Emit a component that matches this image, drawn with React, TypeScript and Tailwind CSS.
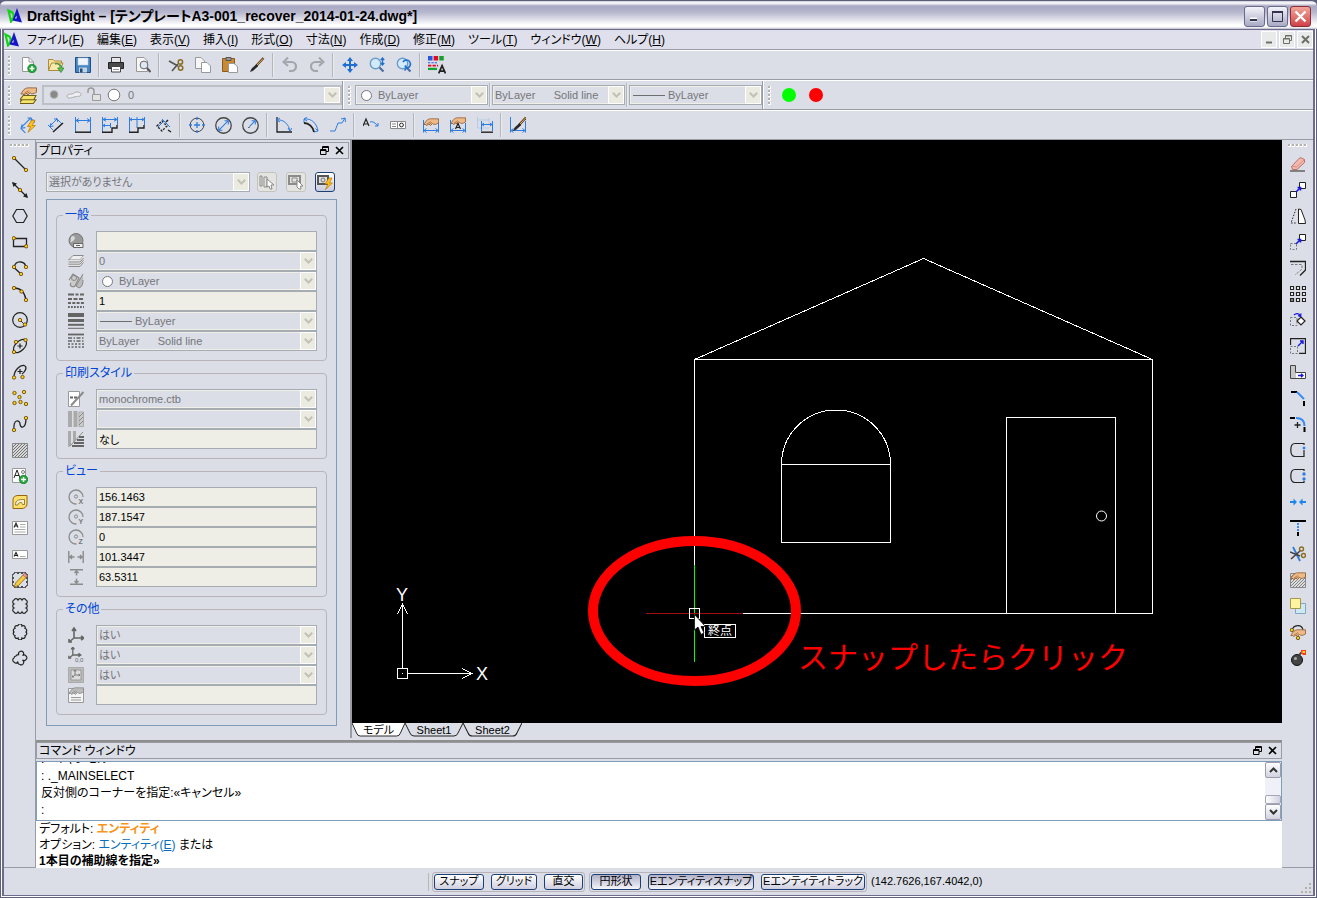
import type { ReactNode } from "react";

const K = "#222";
const B = "#2f7de0";
const G = "#8b8b8b";

type Pt = [number, number];

function Ico({ children, size = 16 }: { children: ReactNode; size?: number }) {
  return (
    <svg width={size} height={size} viewBox="0 0 16 16" fill="none" stroke={K} aria-hidden="true" className="shrink-0">
      {children}
    </svg>
  );
}

function Dots({ at }: { at: Pt[] }) {
  return (
    <>
      {at.map(([x, y]) => (
        <circle key={`${x}-${y}`} cx={x} cy={y} r={1.7} fill="#ffd21a" stroke="#5a3c00" strokeWidth={0.8} />
      ))}
    </>
  );
}

// scalloped outline through the given points
function cloud(pts: Pt[], r = 1.5) {
  return `M${pts[0].join(" ")}` + [...pts.slice(1), pts[0]].map((p) => `A${r} ${r} 0 0 1 ${p.join(" ")}`).join("");
}

const rectCloud: Pt[] = [[2, 2], [6, 2], [10, 2], [14, 2], [14, 6], [14, 10], [14, 14], [10, 14], [6, 14], [2, 14], [2, 10], [2, 6]];
const roundCloud: Pt[] = [[6, 2], [10, 2], [13, 4.5], [14, 8], [13, 11.5], [10, 14], [6, 14], [3, 11.5], [2, 8], [3, 4.5]];
const freeCloud: Pt[] = [[7, 5], [8, 1.5], [11, 2], [10.5, 5.5], [14, 6], [14, 9.5], [10.5, 10], [11.5, 13], [8, 14.5], [6, 11.5], [2, 12], [2, 8], [4, 6]];

const Hand = ({ y = 0, gray = false }: { y?: number; gray?: boolean }) => (
  <>
    <path
      d={`M.8 ${y + 6.5}C2 ${y + 5} 3 ${y + 2.5} 5 ${y + 1.5}C7 ${y + 0.3} 10 ${y + 1} 15.5 ${y + 0.8}V${y + 5}C13 ${y + 6.5} 11 ${y + 7} 9.500 ${y + 5.5}L7.500 ${y + 7.5}L6 ${y + 6}L3.500 ${y + 7.5}L3 ${y + 6.5}Z`}
      fill={gray ? "#bbb" : "#eebb88"}
      stroke={gray ? "#888" : "#8c5a32"}
      strokeWidth={0.8}
    />
    <path d={`M4 ${y + 6}L8 ${y + 3.5}M6 ${y + 6.5}L9 ${y + 4.5}`} stroke={gray ? "#888" : "#8c5a32"} strokeWidth={0.6} />
  </>
);

const Dim = () => <path d="M.5 3V15.500M15.500 6V15.500M1 13.500H15M3.500 11.500L1 13.500L3.500 15.500M12.500 11.500L15 13.500L12.500 15.500" stroke={B} />;
const Bolt = ({ x = 0, y = 0 }: { x?: number; y?: number }) => (
  <path d={`M${x + 11} ${y + 3}L${x + 7} ${y + 9}H${x + 10}L${x + 7.5} ${y + 14.5}L${x + 14.5} ${y + 8}H${x + 11.5}L${x + 14} ${y + 3}Z`} fill="#ffc21a" stroke="#b87500" strokeWidth={0.7} />
);
const Glass = () => (
  <>
    <path d="M10 10L14.5 14.5" stroke="#4d6ea0" strokeWidth={2.2} />
    <circle cx={6.5} cy={6.5} r={5.2} fill="#d3eafb" stroke="#6b9cc9" strokeWidth={1.4} />
  </>
);
const HatchLines = ({ c = "#666" }: { c?: string }) => (
  <path d="M1 5L4 2M1 8L7 2M1 11L10 2M1 14L13 2M3 15L15 3M6 15L15 6M9 15L15 9M12 15L15 12" stroke={c} strokeWidth={0.9} />
);
const MoveArrow = ({ c = "#1919e0" }: { c?: string }) => <path d="M6 10L10 6M7.5 5.5H10.5V8.5" stroke={c} strokeWidth={1.6} />;
const Brush = () => (
  <>
    <path d="M14.5 1L7 9" stroke="#5a3a1a" strokeWidth={2.4} />
    <path d="M14.2 1.4L8 8" stroke="#e0b060" strokeWidth={1} />
    <path d="M7.5 7.5L9 9L4 13.5L1.5 14.5L3 11.5Z" fill={K} strokeWidth={0.6} />
  </>
);
const Scissors = () => (
  <>
    <path d="M1 4L10 9M4 14L10 7" stroke="#555" strokeWidth={1.6} />
    <circle cx={12.4} cy={5} r={2.2} stroke="#8a6b24" strokeWidth={1.5} />
    <circle cx={12.6} cy={11} r={2.2} stroke="#8a6b24" strokeWidth={1.5} />
  </>
);

const fileIcons: ReactNode[][] = [
  [
    <Ico key="new"><path d="M1.5 .5H8L12.5 5V14.5H1.5Z" fill="#fff" stroke="#999" /><path d="M8 .5V5H12.5" stroke="#999" /><circle cx={11} cy={11.5} r={4.3} fill="#22a63c" stroke="#0e7524" strokeWidth={0.7} /><path d="M11 9V14M8.5 11.5H13.5" stroke="#fff" strokeWidth={1.5} /></Ico>,
    <Ico key="open"><path d="M.5 13.5V2.5H5L6.5 4H13.5V6" fill="#f7e3a0" stroke="#b08a3a" /><path d="M.5 13.5L3.5 6H15L12 13.5Z" fill="#fbe9ae" stroke="#b08a3a" /><path d="M7 7C10 6 12 8 12 11H9.5L13 15.5L16 11H14C14 8 11 6 7 7" fill="#5bb955" stroke="#2c8430" strokeWidth={0.7} /></Ico>,
    <Ico key="save"><path d="M.5 .5H15.5V15.5H.5Z" fill="#4486c4" stroke="#1d4f86" /><path d="M3 1H13V8H3Z" fill="#eef4fa" stroke="#bcd0e4" strokeWidth={0.6} /><path d="M4 10.5H12V15.5H4Z" fill="#c4d3e0" stroke="none" /><path d="M5 11.5H7.5V15.5H5Z" fill="#244b77" stroke="none" /></Ico>,
  ],
  [
    <Ico key="print"><path d="M3.5 .5H12.5V6H3.5Z" fill="#e6e6e6" stroke="#444" /><path d="M.5 5.5H15.5V11.5H.5Z" fill="#4a4a4a" /><path d="M3.5 9.5H12.5V15H3.5Z" fill="#fff" stroke="#444" /><path d="M5 12.5H11" stroke="#999" /></Ico>,
    <Ico key="preview"><path d="M1.5 .5H9L12.5 4V14.5H1.5Z" fill="#f6f6f6" stroke="#999" /><circle cx={9} cy={8} r={3.9} fill="#dfe8ee" stroke="#667" /><path d="M12 11L15.5 15" stroke="#555" strokeWidth={2} /></Ico>,
  ],
  [
    <Ico key="cut"><Scissors /></Ico>,
    <Ico key="copy"><path d="M.5 .5H6L9.5 4V11.5H.5Z" fill="#f6f6f6" stroke="#999" /><path d="M6.5 5.5H12L15.5 9V15.5H6.5Z" fill="#fff" stroke="#999" /></Ico>,
    <Ico key="paste"><path d="M.5 1.5H12.5V14.5H.5Z" fill="#c98a35" stroke="#8b5a1a" /><path d="M4 .5H9V3.5H4Z" fill="#999" stroke="#555" /><path d="M6.5 6.5H12L15.5 9.5V15.5H6.5Z" fill="#fff" stroke="#999" /></Ico>,
    <Ico key="brush"><Brush /></Ico>,
  ],
  [
    <Ico key="undo"><path d="M3.5 5H9.5A4.2 4.2 0 0 1 9.5 14H7" stroke="#a3a5aa" strokeWidth={2.2} /><path d="M6 .5L1.5 5L6 9" stroke="#a3a5aa" strokeWidth={2} /></Ico>,
    <Ico key="redo"><path d="M12.5 5H6.5A4.2 4.2 0 0 0 6.5 14H9" stroke="#a3a5aa" strokeWidth={2.2} /><path d="M10 .5L14.5 5L10 9" stroke="#a3a5aa" strokeWidth={2} /></Ico>,
  ],
  [
    <Ico key="pan"><path d="M8 0L11 4H9V7H12V5L16 8L12 11V9H9V12H11L8 16L5 12H7V9H4V11L0 8L4 5V7H7V4H5Z" fill="#1e6fd0" stroke="none" /></Ico>,
    <Ico key="zoom"><Glass /><path d="M13.5 1V8M11.8 3L13.5 1L15.2 3M11.8 6L13.5 8L15.2 6" stroke="#1e6fd0" strokeWidth={1.3} /></Ico>,
    <Ico key="zoomback"><Glass /><path d="M7 5A4 4 0 1 1 11 11M9 8.500L10.500 11L8.500 13.500" stroke="#1e6fd0" strokeWidth={1.600} /></Ico>,
  ],
  [
    <Ico key="props" size={18}><path d="M0 0H4V4H0Z" fill="#2456e0" stroke="none" /><path d="M5 0H9V4H5Z" fill="#e00b2a" stroke="none" /><path d="M10 0H14V4H10Z" fill="#13a32c" stroke="none" /><path d="M0 6H9" stroke="#2456e0" strokeDasharray="2 1" /><path d="M0 8.500H9" stroke="#e00b2a" strokeWidth={1.600} strokeDasharray="3 1" /><path d="M0 11.500H8" stroke="#13a32c" strokeWidth={2} /><path d="M9.500 15.500L12.500 8.500L15.500 15.500M10.500 13.500H14.500" strokeWidth={1.500} /></Ico>,
  ],
];

const dimIcons: ReactNode[][] = [
  [
    <Ico key="smart" size={17}><path d="M1 10L10 1M2 7L1 10.5L5 10M7 1H10.5V4M1 11L5 15M10 1L14 5" stroke={B} /><Bolt /></Ico>,
    <Ico key="aligned"><path d="M2 9L9 2M3 6L2 9.500L5.500 9M6 2H9.500V5M0 8L5 13M8 1L14 7" stroke={B} /><path d="M5 15L15 6" strokeWidth={1.5} /></Ico>,
    <Ico key="linear"><path d="M.5 0V15M15.500 0V15M1 3.500H15M4 1.500L1 3.500L4 5.500M12 1.500L15 3.500L12 5.500" stroke={B} /><path d="M0 15.200H16" strokeWidth={1.5} /></Ico>,
    <Ico key="baseline"><path d="M.5 0V15M15.500 0V8M8.500 6V11M1 2.500H15M1 8.500H8M4 .8L1 2.500L4 4.200M12 .8L15 2.500L12 4.200M3 7L1 8.500L3 10" stroke={B} /><path d="M0 15.200H10V11H15V8" strokeWidth={1.4} /></Ico>,
    <Ico key="continue"><path d="M.5 0V15M8 0V11M15.500 0V8M1 2.500H15M3 1L1 2.500L3 4M13 1L15 2.500L13 4" stroke={B} /><path d="M0 15.200H9V11H15V8" strokeWidth={1.4} /></Ico>,
    <Ico key="ordinate"><path d="M1 9L6 4L11 9L6 14Z" strokeDasharray="2 1.5" strokeWidth={1.4} /><path d="M6 2L14 10M2 10L8 4" stroke={B} /><path d="M10 5L12 3M12 13L15 15" strokeWidth={1.5} /></Ico>,
  ],
  [
    <Ico key="center"><circle cx={8} cy={8} r={6.800} stroke="#444" /><path d="M8 0V3M8 13V16M0 8H3M13 8H16M8 5V11M5 8H11" stroke={B} strokeWidth={1.3} /></Ico>,
    <Ico key="diameter" size={17}><circle cx={8} cy={8} r={7.300} stroke="#444" strokeWidth={1.200} /><path d="M3.500 12.500L12.500 3.500M3.500 9V12.500H7M9 3.500H12.500V7" stroke={B} /></Ico>,
    <Ico key="radius" size={17}><circle cx={8} cy={8} r={7.300} stroke="#444" strokeWidth={1.200} /><path d="M7 9L12.500 3.500M9 3.500H12.500V7" stroke={B} /><path d="M6.500 10V9.500" strokeWidth={1.400} /></Ico>,
  ],
  [
    <Ico key="angular"><path d="M1 0V15H16" strokeWidth={1.3} /><path d="M1 3C8 2 13 8 14 14M4 1L1 3L4 5M12 11L14 14L16 11" stroke={B} /></Ico>,
    <Ico key="arclen"><path d="M1 2C9 1 14 7 15 14M4 0L1 2L4 4M12.500 11.500L15 14M1 2V6M11 15L15 14" stroke={B} /><path d="M1 6C6 6 10 10 11 15" strokeWidth={1.800} /></Ico>,
    <Ico key="jogged"><path d="M0 14H5L8 6H12L15 1M11 2L15 1L15.500 5" stroke={B} /></Ico>,
  ],
  [
    <Ico key="leader"><path d="M0 9L3 2L6 9M1 7H5" strokeWidth={1.2} /><path d="M7 5C10 4 12 6 15 9M12 9H15V6" stroke={B} /></Ico>,
    <Ico key="tolerance"><path d="M.5 4.500H15.500V11.500H.5ZM7.500 4.500V11.500" fill="#fff" stroke="#888" /><path d="M2 7H6M2 9.500H6" stroke="#888" /><circle cx={11.500} cy={8} r={1.900} /></Ico>,
  ],
  [
    <Ico key="edit"><Dim /><Hand y={1} /></Ico>,
    <Ico key="edittext"><Dim /><Hand y={0} /><path d="M5.500 12L8 6.500L10.500 12M6.500 10.500H9.500" strokeWidth={1.200} /></Ico>,
    <Ico key="update"><path d="M.5 0V11H12M12 1V8M1 3H12" stroke="#b7cbe8" /><path d="M4.500 4V14M15.500 4V14M5 7.500H15M7 6L5 7.500L7 9M13 6L15 7.500L13 9" stroke={B} /><path d="M4 15.200H16" strokeWidth={1.4} /></Ico>,
  ],
  [
    <Ico key="style"><Dim /><path d="M.5 0V8M15.500 4V8" stroke={B} /><g transform="translate(2 -1)"><Brush /></g></Ico>,
  ],
];

const drawIcons: ReactNode[] = [
  <><path d="M2 2L14 14" strokeWidth={1.3} /><Dots at={[[2, 2], [14, 14]]} /></>,
  <><path d="M1 1L15 15" strokeWidth={1.3} /><path d="M0 0L5 1.500L1.500 5ZM16 16L11 14.500L14.500 11Z" fill={K} stroke="none" /><Dots at={[[8, 8]]} /></>,
  <path d="M.8 8L4.500 1.500H11.500L15.200 8L11.500 14.500H4.500Z" strokeWidth={1.2} />,
  <><path d="M1.500 4.500H14.500V12.500H1.500Z" strokeWidth={1.300} /><Dots at={[[1.800, 4.200], [14.200, 12.300]]} /></>,
  <><path d="M9 14L2 7.500C3 3 6 1.500 9 2C12 2.500 13.500 4.500 13.500 6.500" strokeWidth={1.300} /><Dots at={[[2, 7], [14, 7], [9, 14]]} /></>,
  <><path d="M2 2Q12 2 14 14" strokeWidth={1.300} /><Dots at={[[2, 2], [9.500, 5.500], [14, 14]]} /></>,
  <><circle cx={8} cy={8} r={7.300} strokeWidth={1.200} /><path d="M8 8L13 13" /><Dots at={[[8, 8], [13, 12.500]]} /></>,
  <><ellipse cx={8} cy={8} rx={8} ry={4.600} transform="rotate(-45 8 8)" strokeWidth={1.200} /><path d="M8 5.500V10.500M5.500 8H10.500" strokeWidth={1.200} /><Dots at={[[13.500, 2], [2, 14], [4, 4]]} /></>,
  <><path d="M2 13C2 6 8 1 12 1.500C16 3 13 8 10 10" strokeWidth={1.300} /><path d="M8 5V10M5.500 7.500H10.500" strokeWidth={1.200} /><Dots at={[[2, 13.500], [10.500, 13]]} /></>,
  <Dots at={[[2.500, 3], [12, 2], [7.500, 7], [2.500, 13], [8.500, 12], [14, 14]]} />,
  <><path d="M2 14C1 2 8 4 8 8S14 14 14 2" strokeWidth={1.300} /><Dots at={[[2, 14], [14, 2]]} /></>,
  <><path d="M.5 1.500H15.500V15.500H.5Z" fill="#d8d8d8" stroke="#888" /><HatchLines /></>,
  <><path d="M.5 .5H13.500V14.500H.5Z" fill="#fff" stroke="#999" /><path d="M2 10L5 2L8 10M3 7.500H7" /><circle cx={11} cy={4} r={1.500} stroke="#777" /><circle cx={11.500} cy={11.500} r={4.200} fill="#22a63c" stroke="#0e7524" strokeWidth={0.700} /><path d="M11.500 9V14M9 11.500H14" stroke="#fff" strokeWidth={1.500} /></>,
  <><path d="M1 6C1 3 3 1.500 6 1.500H15V10C15 13 12 14.500 10 14.500H1Z" fill="#ffdf6b" stroke="#94680c" /><path d="M3.500 11C3.500 6 6 5.500 12.500 5.500V10.500H10.500L9.500 8.500C7 8.500 6 9 6 11Z" fill="#f6f0d0" stroke="#7d6a2a" strokeWidth={0.800} /></>,
  <><path d="M.5 1.500H15.500V14.500H.5Z" fill="#fff" stroke="#999" /><path d="M2 7.500L4 3L6 7.500M2.500 6H5.500" strokeWidth={1.100} /><path d="M8 4.500H13.500M8 7H13.500M2.500 9.500H13.500M2.500 12H13.500" stroke="#aaa" /></>,
  <><path d="M.5 4.500H15.500V12.500H.5Z" fill="#fff" stroke="#999" /><path d="M2 10.500L4 6.500L6 10.500M2.500 9.500H5.500" strokeWidth={1.100} /><path d="M8 10.500H13.500" stroke="#aaa" /></>,
  <><path d={cloud(rectCloud)} /><path d="M2 15L4 10.500L12 2L15 4.500L6.500 13.500Z" fill="#f6c945" stroke="#8a6410" strokeWidth={0.800} /><path d="M11 3L12.500 1.200L15.500 4L14 5.500Z" fill="#f29a9a" stroke="#a05050" strokeWidth={0.600} /></>,
  <path d={cloud(rectCloud, 2.200)} strokeWidth={1.200} />,
  <path d={cloud(roundCloud, 2)} strokeWidth={1.200} />,
  <path d={cloud(freeCloud, 2.200)} strokeWidth={1.200} />,
];

const modifyIcons: ReactNode[] = [
  <><path d="M0 15H15" stroke="#777" strokeWidth={1.800} /><path d="M1.500 10.500L9 2.500Q10 1.500 11.500 2L14.500 3.500V6.500L7 13.500H2.500Z" fill="#f4b8ae" stroke="#b0675c" strokeWidth={0.900} /><path d="M2 10L6.500 11L14 4" stroke="#d88f84" /></>,
  <><path d="M.5 9.500H6.500V15.500H.5ZM9.500 .5H15.500V6.500H9.500Z" fill="#fff" /><MoveArrow /></>,
  <><path d="M6 1L1 15H7" strokeDasharray="1.500 1.500" /><path d="M8.500 1L11 1.500L15 12L15.500 15.500H8.500Z" fill="#fff" /></>,
  <><path d="M.5 9.500H6.500V15.500H.5Z" strokeDasharray="2 1.500" stroke="#777" /><path d="M9.500 .5H15.500V6.500H9.500Z" fill="#fff" /><MoveArrow /></>,
  <><path d="M0 1.500H15.500V10L10 15.500" strokeWidth={1.300} /><path d="M1 4.500H12V9L5 15" strokeDasharray="2.500 1.500" stroke="#777" /></>,
  <>{[1, 7, 13].map((y) => [1, 7, 13].map((x) => <path key={`${x}${y}`} d={`M${x - 0.5} ${y - 0.5}h3v3h-3z`} fill={x === 1 && y === 13 ? "#888" : "#fff"} strokeWidth={1.200} />))}</>,
  <><path d="M.5 5.500H7V13.500H.5Z" strokeDasharray="2 1.500" stroke="#777" /><path d="M11 5L15 9L11 13L7 9Z" fill="#fff" strokeWidth={1.200} /><path d="M4 3C6 1 9 1 10.500 4M8 3.500L10.500 4.500L11 1.500" stroke="#1919e0" strokeWidth={1.300} /></>,
  <><path d="M.5 7V.5H15.500V15.500H9" strokeWidth={1.300} /><path d="M.5 8.500H7.500V15.500H.5Z" strokeDasharray="2 1.500" stroke="#777" /><path d="M8 8L13 3M10 3H13V6" stroke="#1919e0" strokeWidth={1.400} /></>,
  <><path d="M.5 1.500H5.500V8.500H15.500V14.500H.5Z" fill="#fff" stroke="#444" /><path d="M1 2H5V9H6V14H1Z" fill="#c8c8c8" stroke="none" /><path d="M8 11.500H12.500M11 9.800L13 11.500L11 13.200" stroke="#1919e0" strokeWidth={1.300} /></>,
  <><path d="M1 2H7M14 11V16" stroke="#000" strokeWidth={2} /><path d="M7 2L14 9" stroke="#3a8cf0" strokeWidth={2} /></>,
  <><path d="M0 2H5M14.500 11V16" stroke="#000" strokeWidth={2} /><path d="M6 2C12 2 14.500 5 14.500 10" stroke="#3a8cf0" strokeWidth={2} /><path d="M7.500 6V12M4.500 9H10.500" strokeWidth={1.300} /></>,
  <><path d="M14 3V1.500H5C2 1.500 .8 4 .8 8S2 14.500 5 14.500H14V8" strokeWidth={1.200} /><circle cx={14} cy={6} r={1.800} fill={B} stroke="#dbeafe" strokeWidth={0.600} /></>,
  <><path d="M14 3V1.500H5C2 1.500 .8 4 .8 8S2 14.500 5 14.500H14V13" strokeWidth={1.200} /><circle cx={14} cy={6} r={1.700} fill={B} stroke="none" /><circle cx={14} cy={11} r={1.700} fill={B} stroke="none" /></>,
  <><path d="M0 8H4M12 8H16" stroke="#1e86e8" strokeWidth={2} /><path d="M3.500 4.500L7 8L3.500 11.500ZM12.500 4.500L9 8L12.500 11.500Z" fill="#1e86e8" stroke="none" /></>,
  <><path d="M0 1H16M8 12V16" stroke="#000" strokeWidth={2} /><path d="M8 3V11" stroke="#3a8cf0" strokeWidth={2} strokeDasharray="2 1" /></>,
  <><path d="M3 1L10 15" stroke={B} strokeWidth={1.800} /><path d="M0 6L10 10M1 13L10 5" stroke="#444" strokeWidth={1.600} /><circle cx={11.500} cy={3} r={2} stroke="#8a6b24" strokeWidth={1.400} /><circle cx={13.500} cy={9.500} r={2} stroke="#8a6b24" strokeWidth={1.400} /></>,
  <><path d="M.5 1.500H15.500V15.500H.5Z" fill="#ddd" stroke="#888" /><HatchLines c="#777" /><Hand /></>,
  <><path d="M5.500 5.500H15.500V15.500H5.500Z" fill="#cfe8f6" stroke="#84a8bf" /><path d="M.5 .5H10.500V10.500H.5Z" fill="#fff3a0" stroke="#a59a4c" /></>,
  <><path d="M2 7C3 0 12 0 13 6" strokeWidth={1.200} /><Hand y={5} /><Dots at={[[1.800, 6], [8, 14]]} /></>,
  <><circle cx={7} cy={10} r={5.500} fill="#444" stroke="#111" /><circle cx={5.500} cy={8.500} r={1.500} fill="#aaa" stroke="none" /><path d="M9 5L12 2" stroke="#444" strokeWidth={1.800} /><path d="M11 0H16V5H13L11 3Z" fill="#ff3b18" stroke="none" /><path d="M12.500 1H15V3H12.500Z" fill="#ffe02a" stroke="none" /></>,
];

const Rot = ({ axis }: { axis: string }) => (
  <><path d="M15 8A7 7 0 1 0 8.500 15" stroke={G} strokeWidth={1.300} /><circle cx={8} cy={7.500} r={1.600} stroke={G} /><text x={10.500} y={15} fontSize={7} fontWeight={700} fill="#777" stroke="none" fontFamily="Liberation Sans, sans-serif">{axis}</text></>
);
const Axes = ({ y = 0 }: { y?: number }) => <path d={`M6 ${y + 1}V${y + 10}H15M6 ${y + 10}L1 ${y + 14}M4 ${y + 3}L6 ${y}L8 ${y + 3}M13 ${y + 8}L16 ${y + 10}L13 ${y + 12}M1 ${y + 11}V${y + 14}H4`} stroke="#666" strokeWidth={1.600} />;

type Field = { label: string; icon: ReactNode; value: string; kind: "input" | "select"; mark?: "circle" | "line" };

const groups: { title: string; fields: Field[] }[] = [
  {
    title: "一般",
    fields: [
      { label: "ハイパーリンク", kind: "input", value: "", icon: <><circle cx={8} cy={7.500} r={7} fill="#999" stroke="#777" /><path d="M3 4C6 1 9 5 5 8S3 8 3 4" fill="#d8d8d8" stroke="none" /><path d="M5.500 10.500H15V14.500H5.500Z" fill="#eee" stroke="#666" /><path d="M8 12.500H12" stroke="#666" /></> },
      { label: "画層", kind: "select", value: "0", icon: <><path d="M.5 7L5 2.500H15.500L12 7Z" fill="#eee" stroke={G} /><path d="M.5 7V13.500H12L15.500 9.500V2.500L12 7Z" fill="#e4e4e4" stroke="none" /><path d="M.5 9H12L15.500 5M.5 11.200H12L15.500 7.200M.5 13.500H12L15.500 9.500" stroke={G} /></> },
      { label: "線の色", kind: "select", value: "ByLayer", mark: "circle", icon: <><path d="M1 7L5 1L11 5L7 13C4 15 1 12 3 10" fill="#ccc" stroke={G} strokeWidth={1.200} /><circle cx={6} cy={5} r={2.500} stroke="#888" /><path d="M15 1L8 13L11 15C14 14 15 11 15 7" fill="#bbb" stroke="#888" /></> },
      { label: "線種尺度", kind: "input", value: "1", icon: <><path d="M0 1.500H16" stroke="#666" strokeWidth={2} strokeDasharray="6 1.500 3 1.500" /><path d="M0 6H16" stroke="#666" strokeWidth={2} strokeDasharray="4 1.500" /><path d="M0 10H16" stroke="#666" strokeWidth={1.800} strokeDasharray="3 1.300" /><path d="M0 14H16" stroke="#666" strokeWidth={1.800} strokeDasharray="1.800 1.200" /></> },
      { label: "線の太さ", kind: "select", value: "ByLayer", mark: "line", icon: <><path d="M0 2H16" stroke="#666" strokeWidth={4} /><path d="M0 7.500H16" stroke="#666" strokeWidth={3} /><path d="M0 11.800H16" stroke="#666" strokeWidth={2} /><path d="M0 15.300H16" stroke="#666" /></> },
      { label: "線種", kind: "select", value: "ByLayer\u00a0\u00a0\u00a0\u00a0\u00a0\u00a0Solid line", icon: <><path d="M0 1.500H16" stroke="#666" strokeWidth={1.800} /><path d="M0 5H16M0 8H16" stroke="#666" strokeWidth={1.500} strokeDasharray="4 1.500 1.500 1.500" /><path d="M0 11H16M0 14H16" stroke="#666" strokeWidth={1.500} strokeDasharray="2 1.500" /></> },
    ],
  },
  {
    title: "印刷スタイル",
    fields: [
      { label: "印刷スタイルテーブル", kind: "select", value: "monochrome.ctb", icon: <><path d="M.5 .5H11.500V15.500H.5Z" fill="#fff" stroke="#999" /><path d="M2 6.500H10" stroke="#666" strokeWidth={1.800} strokeDasharray="3 1" /><path d="M15.500 1L3 14.500" stroke={G} strokeWidth={2} /></> },
      { label: "印刷スタイル名", kind: "select", value: "", icon: <><path d="M0 0H4V16H0ZM5.500 0H9.500V16H5.500Z" fill="#aaa" stroke="none" /><path d="M11 1H15.500V15.500H11Z" fill="#ccc" stroke="#aaa" /><path d="M11 6L15 2M11 10L15 6M11 14L15 10" stroke="#888" /></> },
      { label: "印刷テーブルの種類", kind: "input", value: "なし", icon: <><path d="M0 0H3V15L0 16ZM5 0H8V9L5 12Z" fill="#aaa" stroke="none" /><path d="M15 1L2 15" stroke={G} /><path d="M11 6H16M9 9H16M6 12H16M4 15H16" stroke="#666" strokeWidth={2} /></> },
    ],
  },
  {
    title: "ビュー",
    fields: [
      { label: "中心 X", kind: "input", value: "156.1463", icon: <Rot axis="X" /> },
      { label: "中心 Y", kind: "input", value: "187.1547", icon: <Rot axis="Y" /> },
      { label: "中心 Z", kind: "input", value: "0", icon: <Rot axis="Z" /> },
      { label: "幅", kind: "input", value: "101.3447", icon: <path d="M.8 2V14M15.200 2V14M2 8H6.500M9.500 8H14M4 6L2 8L4 10M12 6L14 8L12 10" stroke={G} strokeWidth={1.400} /> },
      { label: "高さ", kind: "input", value: "63.5311", icon: <path d="M2 .8H15M2 15.200H15M8.500 2V6.500M8.500 9.500V14M6.500 4L8.500 2L10.500 4M6.500 12L8.500 14L10.500 12" stroke={G} strokeWidth={1.400} /> },
    ],
  },
  {
    title: "その他",
    fields: [
      { label: "アイコン表示", kind: "select", value: "はい", icon: <Axes y={1} /> },
      { label: "原点に表示", kind: "select", value: "はい", icon: <><g transform="scale(.8)"><Axes /></g><text x={7} y={15} fontSize={6} fill="#666" stroke="none" fontFamily="Liberation Sans, sans-serif">0,0</text></> },
      { label: "ビューポートごと", kind: "select", value: "はい", icon: <><path d="M.5 .5H15.500V15.500H.5Z" fill="#bbb" stroke="#aaa" /><path d="M3 3H13V13H3Z" fill="#ddd" stroke="#999" /><g transform="translate(4 3) scale(.5)"><Axes /></g></> },
      { label: "座標系名", kind: "input", value: "", icon: <><path d="M.5 1.500H15.500V15.500H.5Z" fill="#f4f4f4" stroke="#999" /><Hand gray /><path d="M3 10.500H13M3 13H13" stroke="#999" /></> },
    ],
  },
];

function Combo({ label, value, mark, className = "" }: { label: string; value: string; mark?: "circle" | "line"; className?: string }) {
  return (
    <div className={`relative flex h-5 border border-[#a5acb2] bg-[#dbdee6] ring-1 ring-inset ring-[#efefe8] ${className}`}>
      {mark === "circle" && (
        <svg className="pointer-events-none absolute left-1 top-[3px]" width="13" height="13" viewBox="0 0 13 13" aria-hidden="true">
          <circle cx="6.5" cy="6.5" r="5" fill="#fff" stroke="#777" />
        </svg>
      )}
      {mark === "line" && <span className="pointer-events-none absolute left-[3px] top-[9px] h-px w-8 bg-[#6f6f6f]" />}
      <select
        aria-label={label}
        disabled
        className={`min-w-0 flex-1 appearance-none bg-transparent pr-5 text-[11px] leading-[18px] text-[#74757a] opacity-100 ${mark === "circle" ? "pl-[22px]" : mark === "line" ? "pl-[38px]" : "pl-[2px]"}`}
      >
        <option>{value}</option>
      </select>
      <Chevron />
    </div>
  );
}

function Chevron() {
  return (
    <span className="pointer-events-none absolute inset-y-0 right-0 flex w-4 items-center justify-center border border-white bg-[#ecebe2]">
      <svg width="9" height="6" viewBox="0 0 9 6" fill="none" stroke="#c2c1b6" strokeWidth="2" aria-hidden="true">
        <path d="M.8 .8L4.500 4.500L8.200 .8" />
      </svg>
    </span>
  );
}

function Grip({ horizontal = false }: { horizontal?: boolean }) {
  return (
    <span className={`flex shrink-0 gap-px ${horizontal ? "mb-1 mt-1 justify-center" : "mx-1 flex-col"}`}>
      {[0, 1, 2, 3, 4].map((i) => (
        <i key={i} className="size-[3px] border-b border-r border-white bg-[#b3b3ac]" />
      ))}
    </span>
  );
}

const Sep = () => <span className="mx-[2px] h-6 w-[2px] shrink-0 border-l border-[#b4b6bc] border-r border-r-[#e9eaee]" />;
const ThinSep = () => <span className="mx-px h-6 w-[2px] shrink-0 border-l border-[#b4b6bc] border-r border-r-[#e9eaee]" />;

function ToolRow({ groups }: { groups: ReactNode[][] }) {
  return (
    <div className="flex h-[30px] items-center border-b border-t border-b-[#9a9ca5] border-t-white">
      <Grip />
      {groups.map((g, i) => (
        <div key={i} className="flex items-center">
          {i > 0 && <Sep />}
          {g.map((icon, j) => (
            <button key={j} type="button" className="flex h-6 w-[27px] items-center justify-center">{icon}</button>
          ))}
        </div>
      ))}
    </div>
  );
}

function SideBar({ icons }: { icons: ReactNode[] }) {
  return (
    <div className="flex w-[31px] shrink-0 flex-col items-center border-b border-[#9a9ca5]">
      <Grip horizontal />
      {icons.map((icon, i) => (
        <button key={i} type="button" className="flex h-[26px] w-[26px] items-center justify-center"><Ico>{icon}</Ico></button>
      ))}
    </div>
  );
}

const Logo = () => (
  <svg width="15" height="15" viewBox="0 0 15 15" aria-hidden="true" className="shrink-0">
    <path d="M1.500 2.500L5.500 4.500Q8.500 9 4 13.500Z" fill="none" stroke="#13d613" strokeWidth="2.200" />
    <path d="M10 0L15 14.500L5.500 12.500Z" fill="#1616c8" />
    <path d="M9.500 7.500V10.500L8 10.500Z" fill="#fff" />
  </svg>
);

function PanelTitle({ children }: { children: ReactNode }) {
  return (
    <div className="flex h-[17px] shrink-0 items-center border border-[#9a9ca5] px-[2px] text-xs leading-none">
      <h2 className="flex-1">{children}</h2>
      <button type="button" aria-label="フロート" className="mr-[6px]">
        <svg width="9" height="9" viewBox="0 0 9 9" fill="none" stroke="#000"><path d="M2.500 3V.5H8.500V5.500H6M2.500 1.500H8.500M.5 3.500H6V8.500H.5ZM.5 4.500H6" /></svg>
      </button>
      <button type="button" aria-label="閉じる" className="mr-[2px]">
        <svg width="9" height="9" viewBox="0 0 9 9" fill="none" stroke="#000" strokeWidth="1.600"><path d="M1 1L8 8M8 1L1 8" /></svg>
      </button>
    </div>
  );
}

const menus = [["ファイル", "F"], ["編集", "E"], ["表示", "V"], ["挿入", "I"], ["形式", "O"], ["寸法", "N"], ["作成", "D"], ["修正", "M"], ["ツール", "T"], ["ウィンドウ", "W"], ["ヘルプ", "H"]];

function Properties() {
  const small = "flex size-5 items-center justify-center rounded-[3px] border";
  return (
    <section className="flex w-[314px] shrink-0 flex-col pr-px pt-[2px]">
      <PanelTitle>プロパティ</PanelTitle>
      <div className="flex flex-1 flex-col pl-[10px] pr-3 pt-[13px]">
        <div className="flex items-center gap-[9px]">
          <Combo label="選択" value="選択がありません" className="mr-[-2px] w-[204px]" />
          <button type="button" aria-label="選択" className={`${small} border-[#c3c3bd] bg-[#e4e4e2]`}><Ico><path d="M1 2H3V12H1ZM5 3H8V13H5Z" stroke={G} /><path d="M8 5L15 11H12L13 15L11 15L10 12L8 13Z" fill="#fff" stroke="#888" /></Ico></button>
          <button type="button" aria-label="一致を選択" className={`${small} border-[#c3c3bd] bg-[#e4e4e2]`}><Ico><path d="M1 2H12V10H1Z" stroke={G} strokeWidth={2} /><path d="M4 4H9V8H4Z" stroke={G} /><path d="M9 6L15 12H12.500L13 15H11L9 13Z" fill="#fff" stroke="#888" /></Ico></button>
          <button type="button" aria-label="スマート選択" className={`${small} border-[#1c3f75] bg-gradient-to-b from-white to-[#c9cbdd]`}><Ico><path d="M1 2H11V10H1Z" fill="#ddd" stroke="#555" strokeWidth={2} /><circle cx={6} cy={6} r={2} stroke="#777" /><Bolt x={1} y={1} /></Ico></button>
        </div>
        <div className="mt-[7px] border border-[#7f9db9] px-[9px] pb-[10px] pt-2">
          <div className="flex flex-col gap-[5px]">
            {groups.map((g) => (
              <fieldset key={g.title} className="min-w-0 rounded-[4px] border border-[#b9b4ba] px-[9px] pb-[9px]">
                <legend className="ml-[-3px] px-[2px] text-xs leading-[14px] text-[#0046d5]">{g.title}</legend>
                <div className="pt-[9px]">
                  {g.fields.map((f) => (
                    <div key={f.label} className="flex h-5 items-center gap-3 pl-[2px]">
                      <Ico>{f.icon}</Ico>
                      {f.kind === "select" ? (
                        <Combo label={f.label} value={f.value} mark={f.mark} className="flex-1" />
                      ) : (
                        <input aria-label={f.label} defaultValue={f.value} className="h-5 min-w-0 flex-1 border border-[#a5acb2] bg-[#eeeee6] px-[2px] text-[11px] text-black" />
                      )}
                    </div>
                  ))}
                </div>
              </fieldset>
            ))}
          </div>
        </div>
      </div>
    </section>
  );
}

function Drawing() {
  return (
    <svg viewBox="0 0 930 583" className="h-0 min-h-0 w-full flex-1 bg-black" fill="none" stroke="#fff" fontFamily="Liberation Sans, Noto Sans CJK JP, sans-serif">
      <g shapeRendering="crispEdges">
        <path d="M342.500 219.500L571.500 118.500L800.500 219.500Z" />
        <path d="M342.500 219.500V425M391 473.500H800.500V219.500" />
        <path d="M429.500 324.500V402.500H538.500V324.500ZM429.500 324.500A54.500 54.500 0 0 1 538.500 324.500" />
        <path d="M654.500 473.500V277.500H763.500V473.500" />
        <path d="M50.500 528V464M56 533.500H120M45.500 528.500H55.500V538.500H45.500ZM45.500 474L50.500 464L55.500 474M110 528.500L120 533.500L110 538.500" />
        <path d="M342.500 425V522" stroke="#00ff00" />
        <path d="M294 473.500H391" stroke="#a01010" />
      </g>
      <circle cx="749.500" cy="376" r="5" />
      <rect x="50" y="533" width="1" height="1" fill="#fff" stroke="none" />
      <text x="44" y="461" fontSize="18" fill="#fff" stroke="none">Y</text>
      <text x="124" y="540" fontSize="18" fill="#fff" stroke="none">X</text>
      <ellipse cx="342.500" cy="471" rx="101.500" ry="70" stroke="#f00" strokeWidth="10" />
      <rect x="337.500" y="468.500" width="10" height="10" shapeRendering="crispEdges" />
      <rect x="352.500" y="484.500" width="31" height="13" fill="#000" shapeRendering="crispEdges" />
      <text x="356" y="495" fontSize="12" fill="#fff" stroke="none">終点</text>
      <path d="M342.500 474.500V490L346 487L349 494.500L352 493L349 486.500H353.500Z" fill="#fff" stroke="#000" strokeWidth="0.800" />
      <text x="446" y="528" fontSize="30" fill="#f00" stroke="none" className="[font-feature-settings:normal]">スナップしたらクリック</text>
    </svg>
  );
}

function SheetTab({ children, active = false, width }: { children: ReactNode; active?: boolean; width: string }) {
  return (
    <button type="button" className={`relative h-[14px] text-[11px] leading-none ${width}`}>
      <svg className="absolute inset-0 size-full" viewBox="0 0 58 14" preserveAspectRatio="none" fill={active ? "#fff" : "#dbdee6"} stroke="#222" aria-hidden="true">
        <path d="M0 0L5 10Q6 13 9 13H49Q52 13 53 10L58 0" />
      </svg>
      <span className="relative">{children}</span>
    </button>
  );
}

function CommandWindow() {
  return (
    <section className="flex shrink-0 flex-col border-t-2 border-[#8e8f8c]">
      <PanelTitle>コマンド ウィンドウ</PanelTitle>
      <div className="mt-[2px] flex h-[60px] border border-[#7f9db9] bg-white">
        <div className="flex flex-1 flex-col justify-end overflow-hidden pb-px pl-1 text-xs leading-[17px]">
          <p className="shrink-0">: «キャンセル»</p>
          <p className="shrink-0">: ._MAINSELECT</p>
          <p className="shrink-0">反対側のコーナーを指定:«キャンセル»</p>
          <p className="shrink-0">:</p>
        </div>
        <div className="flex w-4 flex-col bg-[#eff0f8]">
          <button type="button" aria-label="上へ" className="flex h-4 items-center justify-center rounded-[2px] border border-[#9c9cae] bg-gradient-to-b from-white to-[#d2d2e0]">
            <svg width="9" height="6" viewBox="0 0 9 6" fill="none" stroke="#333" strokeWidth="2"><path d="M1 5L4.500 1.500L8 5" /></svg>
          </button>
          <span className="flex-1" />
          <span className="h-[9px] rounded-[2px] border border-[#a5a5b8] bg-gradient-to-r from-white to-[#d2d2e0]" />
          <button type="button" aria-label="下へ" className="flex h-4 items-center justify-center rounded-[2px] border border-[#9c9cae] bg-gradient-to-b from-white to-[#d2d2e0]">
            <svg width="9" height="6" viewBox="0 0 9 6" fill="none" stroke="#333" strokeWidth="2"><path d="M1 1L4.500 4.500L8 1" /></svg>
          </button>
        </div>
      </div>
      <div className="bg-white pl-[3px] text-xs leading-4">
        <p>デフォルト: <b className="text-[#f7941d]">エンティティ</b></p>
        <p>オプション: <a href="#entity" className="text-[#0b6cb8]">エンティティ(<u>E</u>)</a> または</p>
        <label className="flex h-[15px] font-bold">
          1本目の補助線を指定»
          <input className="min-w-0 flex-1 bg-transparent font-normal outline-none" />
        </label>
      </div>
    </section>
  );
}

function StatusButton({ children, on = false, width }: { children: ReactNode; on?: boolean; width: string }) {
  return (
    <button
      type="button"
      aria-pressed={on}
      className={`h-4 whitespace-nowrap rounded-[3px] border border-[#1c3f75] text-[11px] leading-[13px] ${width} ${on ? "bg-gradient-to-b from-[#b2b2c8] to-[#f4f4fa]" : "bg-gradient-to-b from-white to-[#cfcfe0]"}`}
    >
      {children}
    </button>
  );
}

export default function App() {
  const caption = "flex size-[21px] items-center justify-center rounded-[3px] border";
  const mdi = "flex h-[17px] w-4 items-center justify-center border border-white bg-[#e9ebeb]";
  return (
    <div className="flex min-h-screen flex-col bg-[#5f5f80] text-black [font-family:'Liberation_Sans','Noto_Sans_CJK_JP',sans-serif] [font-feature-settings:'palt']">
      <header className="flex h-[29px] items-center gap-[5px] rounded-t-[6px] border-t border-[#5f5e7a] bg-[linear-gradient(#c8c8da_0px,#fff_2px,#a9a8c3_5px,#b6b6cd_11px,#dcdce8_18px,#fff_24px,#fff_26px,#b9b9cb_28px)] pl-[7px] pr-[6px]">
        <Logo />
        <h1 className="flex-1 whitespace-nowrap pt-[2px] text-sm font-bold leading-none">DraftSight – [テンプレートA3-001_recover_2014-01-24.dwg*]</h1>
        <div className="flex gap-[2px] pt-[3px]">
          <button type="button" aria-label="最小化" className={`${caption} border-[#6a6a8c] bg-gradient-to-b from-[#f4f4fa] to-[#a9a9c4]`}><svg width="13" height="13"><path d="M2 9.500H9" stroke="#fff" strokeWidth="4" /><path d="M2 10H9" stroke="#33334d" strokeWidth="2" /></svg></button>
          <button type="button" aria-label="最大化" className={`${caption} border-[#6a6a8c] bg-gradient-to-b from-[#f4f4fa] to-[#a9a9c4]`}><svg width="13" height="13" fill="none"><path d="M1.500 2.500H11.500V11.500H1.500Z" stroke="#33334d" /><path d="M1 2H12" stroke="#33334d" strokeWidth="2" /></svg></button>
          <button type="button" aria-label="閉じる" className={`${caption} border-[#8e2c38] bg-gradient-to-b from-[#f0a59a] to-[#cf3f49]`}><svg width="13" height="13"><path d="M1.500 1.500L11.500 11.500M11.500 1.500L1.500 11.500" stroke="#fff" strokeWidth="2.400" /></svg></button>
        </div>
      </header>

      <div className="mx-px mb-px flex flex-1 flex-col border-x border-b border-white bg-[#6d6c8c] px-[2px] pb-px">
        <div className="flex flex-1 flex-col bg-[#dbdee6]">
          <nav className="flex h-[21px] items-center border-b border-t border-b-[#9a9ca5] border-t-[#6d6c8c] bg-[#dfe0ec]">
            <Logo />
            <div className="ml-2 flex flex-1 gap-[13px]">
              {menus.map(([name, key]) => (
                <button key={key} type="button" className="whitespace-nowrap text-xs leading-none">{name}(<u>{key}</u>)</button>
              ))}
            </div>
            <div className="flex gap-[2px]">
              <button type="button" aria-label="子ウィンドウを最小化" className={mdi}><svg width="9" height="9"><path d="M1 7.500H7" stroke="#6f6f66" strokeWidth="2" /></svg></button>
              <button type="button" aria-label="子ウィンドウを元に戻す" className={mdi}><svg width="9" height="9" fill="none" stroke="#6f6f66"><path d="M2.500 3V.5H8.500V5.500H7M2 1H9M.5 3.500H6.500V8.500H.5ZM0 4H7" /></svg></button>
              <button type="button" aria-label="子ウィンドウを閉じる" className={mdi}><svg width="9" height="9"><path d="M1 1L8 8M8 1L1 8" stroke="#6f6f66" strokeWidth="2" /></svg></button>
            </div>
          </nav>

          <ToolRow groups={fileIcons} />

          <div className="flex h-[30px] items-stretch border-b border-t border-b-[#9a9ca5] border-t-white">
            <div className="flex items-center border-r border-[#9a9ca5]">
              <Grip />
              <button type="button" aria-label="画層マネージャー" className="flex w-[27px] justify-center"><Ico size={17}><path d="M0 12L3 8H15L13 12ZM0 14L2 12H15L12.500 15.500H0Z" fill="#f5e36a" stroke="#6d5d17" /><Hand /></Ico></button>
              <div className="relative flex h-5 w-[300px] border-2 border-[#bcc0c4]">
                <svg width="74" height="16" viewBox="0 0 74 16" fill="none" className="pointer-events-none absolute left-1 top-0" aria-hidden="true">
                  <circle cx="6" cy="7.500" r="4" fill="#888" stroke="#bbb" />
                  <path d="M19 9C20 6 24 8 26 6S33 5 33 7.500S29 9 26 10S19 12 19 9Z" fill="#eceef2" stroke="#aaa" />
                  <path d="M44.500 7.500H52.500V13.500H44.500Z" fill="#e2e2e2" stroke="#999" /><path d="M40 6V4A3 3 0 0 1 46 4V7" stroke="#999" strokeWidth="1.500" />
                  <circle cx="66" cy="8" r="5.800" fill="#fff" stroke="#777" />
                </svg>
                <select aria-label="画層" disabled className="min-w-0 flex-1 appearance-none bg-transparent pl-[84px] text-[11px] leading-4 text-[#74757a] opacity-100"><option>0</option></select>
                <Chevron />
              </div>
            </div>
            <div className="flex items-center border-l border-r border-l-white border-r-[#9a9ca5]">
              <Grip />
              <Combo label="線の色" value="ByLayer" mark="circle" className="w-[133px]" />
              <ThinSep />
              <Combo label="線種" value={"ByLayer\u00a0\u00a0\u00a0\u00a0\u00a0\u00a0Solid line"} className="w-[133px]" />
              <ThinSep />
              <Combo label="線の太さ" value="ByLayer" mark="line" className="w-[133px]" />
            </div>
            <div className="flex items-center border-l border-white">
              <Grip />
              <button type="button" aria-label="記録開始" className="flex w-[27px] justify-center"><span className="size-[14px] rounded-full bg-[#00ff00]" /></button>
              <button type="button" aria-label="記録停止" className="flex w-[27px] justify-center"><span className="size-[14px] rounded-full bg-[#ff0000]" /></button>
            </div>
          </div>

          <ToolRow groups={dimIcons} />

          <div className="flex flex-1">
            <SideBar icons={drawIcons} />
            <main className="flex min-w-0 flex-1 flex-col border-l border-[#9a9ca5]">
              <div className="flex flex-1 pb-[2px]">
                <Properties />
                <div className="flex min-w-0 flex-1 flex-col border-l-2 border-[#9a9ca5]">
                  <Drawing />
                  <div className="flex h-[15px] shrink-0">
                    <SheetTab active width="w-[53px]">モデル</SheetTab>
                    <SheetTab width="w-[58px]">Sheet1</SheetTab>
                    <SheetTab width="w-[59px]">Sheet2</SheetTab>
                  </div>
                </div>
              </div>
              <CommandWindow />
            </main>
            <SideBar icons={modifyIcons} />
          </div>

          <footer className="flex h-[27px] shrink-0 items-center">
            <span className="h-[18px] w-[425px] shrink-0 border-r border-[#b9b9b4]" />
            <div className="ml-[3px] flex gap-[7px] rounded-[3px] border border-[#b9b4ba] p-px">
              <StatusButton width="w-[50px]">スナップ</StatusButton>
              <StatusButton width="w-[46px]">グリッド</StatusButton>
              <StatusButton width="w-[39px]">直交</StatusButton>
            </div>
            <div className="ml-1 flex gap-[7px] rounded-[3px] border border-[#b9b4ba] p-px">
              <StatusButton on width="w-[50px]">円形状</StatusButton>
              <StatusButton on width="w-[106px]">Eエンティティスナップ</StatusButton>
              <StatusButton width="w-[104px]">Eエンティティトラック</StatusButton>
            </div>
            <span className="ml-1 flex-1 text-[11px]">(142.7626,167.4042,0)</span>
            <svg width="12" height="12" viewBox="0 0 12 12" className="self-end" fill="#b4b2a6" aria-hidden="true">
              <path d="M8 0h2v2h-2zM4 4h2v2h-2zM8 4h2v2h-2zM0 8h2v2h-2zM4 8h2v2h-2zM8 8h2v2h-2z" />
            </svg>
          </footer>
        </div>
      </div>
    </div>
  );
}
